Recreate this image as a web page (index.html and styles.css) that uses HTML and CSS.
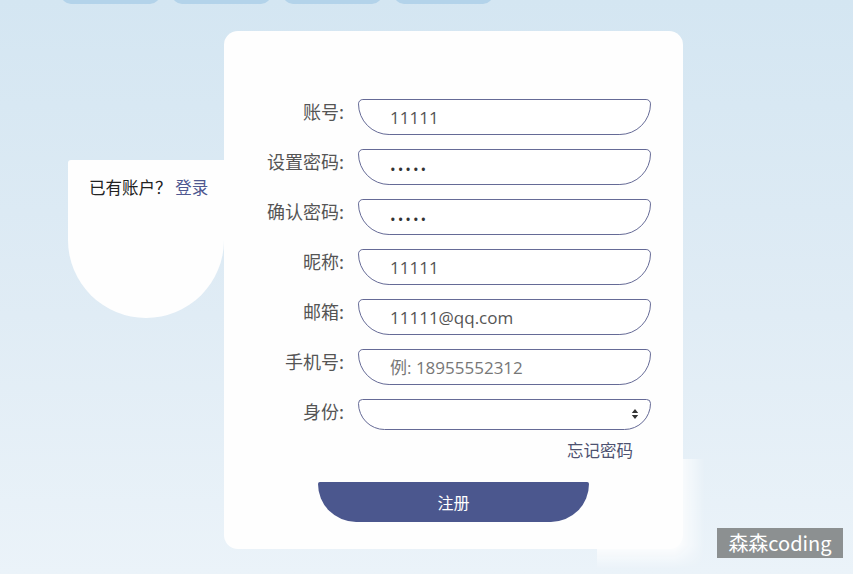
FILE: index.html
```html
<!DOCTYPE html>
<html lang="zh-CN">
<head>
<meta charset="utf-8">
<title>注册</title>
<link rel="stylesheet" href="styles.css">
</head>
<body>
<div class="page">
  <nav class="tabs">
    <span class="tab"></span>
    <span class="tab"></span>
    <span class="tab"></span>
    <span class="tab"></span>
  </nav>
  <main class="stage">
    <aside class="side">
      <p class="side-text">已有账户？ <a class="link" href="#">登录</a></p>
    </aside>
    <section class="card">
      <form class="form">
        <label class="lbl">账号:</label>
        <input class="field" type="text" value="11111">
        <label class="lbl">设置密码:</label>
        <input class="field pw" type="password" value="11111">
        <label class="lbl">确认密码:</label>
        <input class="field pw" type="password" value="11111">
        <label class="lbl">昵称:</label>
        <input class="field" type="text" value="11111">
        <label class="lbl">邮箱:</label>
        <input class="field" type="text" value="11111@qq.com">
        <label class="lbl">手机号:</label>
        <input class="field" type="text" placeholder="例: 18955552312">
        <label class="lbl">身份:</label>
        <div class="select-wrap">
          <select class="field select"><option></option></select>
          <svg class="arrows" width="8" height="12" viewBox="0 0 8 12"><path d="M4 1 L7.2 5 H0.8 Z M4 11 L7.2 7 H0.8 Z" fill="#333"/></svg>
        </div>
        <div class="forget-row"><a class="forget" href="#">忘记密码</a></div>
        <div class="btn-row"><button class="btn" type="button">注册</button></div>
      </form>
    </section>
  </main>
  <div class="glare"></div>
  <div class="watermark">森森coding</div>
</div>
</body>
</html>
```
FILE: styles.css
```css
* { box-sizing: border-box; }
html, body { margin: 0; padding: 0; }
body {
  width: 853px;
  height: 574px;
  overflow: hidden;
  background: linear-gradient(180deg, #d4e6f2 0%, #e0ecf5 55%, #ebf3f9 100%);
  font-family: "Open Sans", "Noto Sans CJK SC", sans-serif;
  color: #555;
}
.page { position: relative; width: 853px; height: 574px; }
.tabs {
  display: flex;
  align-items: flex-end;
  gap: 12px;
  padding-left: 61px;
  height: 4px;
  overflow: hidden;
}
.tab {
  flex: none;
  width: 99px;
  height: 20px;
  border-radius: 12px;
  background: #b3d3ea;
}
.stage {
  display: flex;
  align-items: flex-start;
  padding-left: 68px;
  margin-top: 27px;
}
.side {
  width: 156px;
  height: 158px;
  margin-top: 129px;
  background: #fefefe;
  border-radius: 3px 0 78px 78px;
  padding: 17px 0 0 21px;
}
.side-text {
  margin: 0;
  font-family: "Noto Sans CJK SC", sans-serif;
  font-size: 16.5px;
  color: #222;
  line-height: 20px;
  white-space: nowrap;
}
.link { color: #4f5890; text-decoration: none; }
.card {
  width: 459px;
  height: 518px;
  background: #fefefe;
  border-radius: 14px;
  padding: 68px 32px 0 14px;
}
.form {
  display: grid;
  grid-template-columns: 106px 293px;
  column-gap: 14px;
  row-gap: 14px;
  align-items: start;
}
.lbl {
  text-align: right;
  font-family: "Noto Sans CJK SC", sans-serif;
  font-size: 18px;
  line-height: 24px;
  color: #555;
  white-space: nowrap;
}
.field {
  display: block;
  width: 293px;
  height: 36px;
  border: 1.4px solid #656a96;
  border-radius: 5px 5px 32px 32px;
  background: #fff;
  padding: 1px 0 0 31px;
  font-family: "Open Sans", "Noto Sans CJK SC", sans-serif;
  font-size: 17px;
  color: #555;
  outline: none;
}
.field::placeholder { color: #777; font-family: "Open Sans", "Noto Sans CJK SC", sans-serif; }
.pw { font-size: 15px; letter-spacing: 2px; color: #333; padding-top: 3px; }
.select-wrap { position: relative; }
.select { appearance: none; -webkit-appearance: none; height: 31px; border-radius: 5px 5px 30px 30px; }
.arrows { position: absolute; right: 12px; top: 9px; }
.forget-row {
  grid-column: 1 / 3;
  display: flex;
  justify-content: flex-end;
  padding-right: 18px;
  margin-top: -4px;
}
.forget {
  font-family: "Noto Sans CJK SC", sans-serif;
  font-size: 16.5px;
  color: #4d5270;
  text-decoration: none;
  line-height: 20px;
}
.btn-row {
  grid-column: 1 / 3;
  display: flex;
  justify-content: center;
  padding-left: 18px;
  margin-top: 8px;
}
.btn {
  width: 271px;
  height: 40px;
  border: none;
  border-radius: 2px 2px 40px 40px;
  background: #4b578e;
  color: #fff;
  font-family: "Noto Sans CJK SC", sans-serif;
  font-size: 16px;
}
.glare {
  position: absolute;
  left: 597px;
  top: 459px;
  width: 108px;
  height: 110px;
  background: #fefefe;
  -webkit-mask-image: linear-gradient(90deg, #000 72%, transparent 100%), linear-gradient(180deg, #000 78%, transparent 100%);
  -webkit-mask-composite: source-in;
  mask-image: linear-gradient(90deg, #000 72%, transparent 100%), linear-gradient(180deg, #000 78%, transparent 100%);
  mask-composite: intersect;
}
.watermark {
  position: absolute;
  left: 717px;
  top: 528px;
  width: 126px;
  height: 30px;
  background: #8c9091;
  color: #fff;
  font-family: "Noto Sans CJK SC", sans-serif;
  font-size: 20px;
  line-height: 30px;
  text-align: center;
}
```
